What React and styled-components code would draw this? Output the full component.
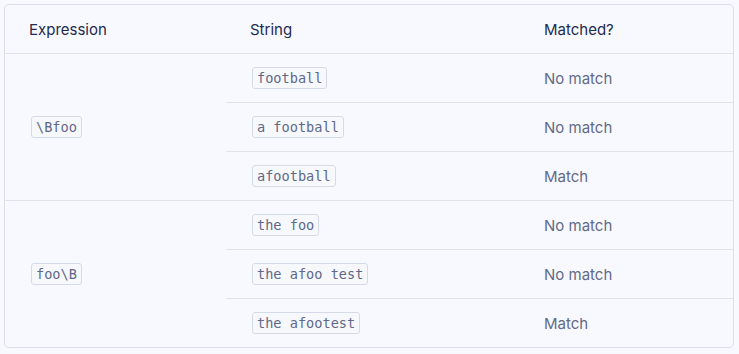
import React from 'react';
import styled, { createGlobalStyle } from 'styled-components';

const GlobalStyle = createGlobalStyle`
  body {
    margin: 4px;
    background: #f8f9fe;
    font-family: Inter, "Noto Sans", sans-serif;
  }
`;

const groups = [
  {
    expr: '\\Bfoo',
    rows: [
      { str: 'football', result: 'No match' },
      { str: 'a football', result: 'No match' },
      { str: 'afootball', result: 'Match' },
    ],
  },
  {
    expr: 'foo\\B',
    rows: [
      { str: 'the foo', result: 'No match' },
      { str: 'the afoo test', result: 'No match' },
      { str: 'the afootest', result: 'Match' },
    ],
  },
];

const App = () => {
  return (
    <>
      <GlobalStyle />
      <Card>
        <Table>
          <colgroup>
            <col style={{ width: 221 }} />
            <col style={{ width: 294 }} />
            <col />
          </colgroup>
          <thead>
            <tr>
              <HeadCell>Expression</HeadCell>
              <HeadCell>String</HeadCell>
              <HeadCell>Matched?</HeadCell>
            </tr>
          </thead>
          <tbody>
            {groups.map((g, gi) =>
              g.rows.map((r, ri) => (
                <tr key={gi + '-' + ri}>
                  {ri === 0 && (
                    <Cell rowSpan={g.rows.length} $last={gi === groups.length - 1}>
                      <Code>{g.expr}</Code>
                    </Cell>
                  )}
                  <Cell $last={gi === groups.length - 1 && ri === g.rows.length - 1}>
                    <Code>{r.str}</Code>
                  </Cell>
                  <Cell $last={gi === groups.length - 1 && ri === g.rows.length - 1}>
                    {r.result}
                  </Cell>
                </tr>
              ))
            )}
          </tbody>
        </Table>
      </Card>
    </>
  );
};

const Card = styled.div`
  width: 728px;
  border: 1px solid #d9deea;
  border-radius: 5px;
  overflow: hidden;
  background: #f8f9fe;
`;

const Table = styled.table`
  width: 100%;
  border-collapse: collapse;
  table-layout: fixed;
`;

const HeadCell = styled.th`
  height: 48px;
  padding: 0 0 0 24px;
  text-align: left;
  font-weight: 400;
  font-size: 15px;
  color: #222a4f;
  border-bottom: 1px solid #dfe3ec;
`;

const Cell = styled.td`
  height: 48px;
  padding: 0 0 0 24px;
  font-size: 15px;
  color: #626a88;
  border-bottom: ${(p) => (p.$last ? 'none' : '1px solid #dfe3ec')};
`;

const Code = styled.code`
  display: inline-block;
  font-family: "DejaVu Sans Mono", monospace;
  font-size: 13.6px;
  line-height: 20px;
  padding: 0 4px;
  margin-left: 2px;
  color: #5f6888;
  background: #f6f8fc;
  border: 1px solid #d5dbe6;
  border-radius: 3px;
`;

export default App;
